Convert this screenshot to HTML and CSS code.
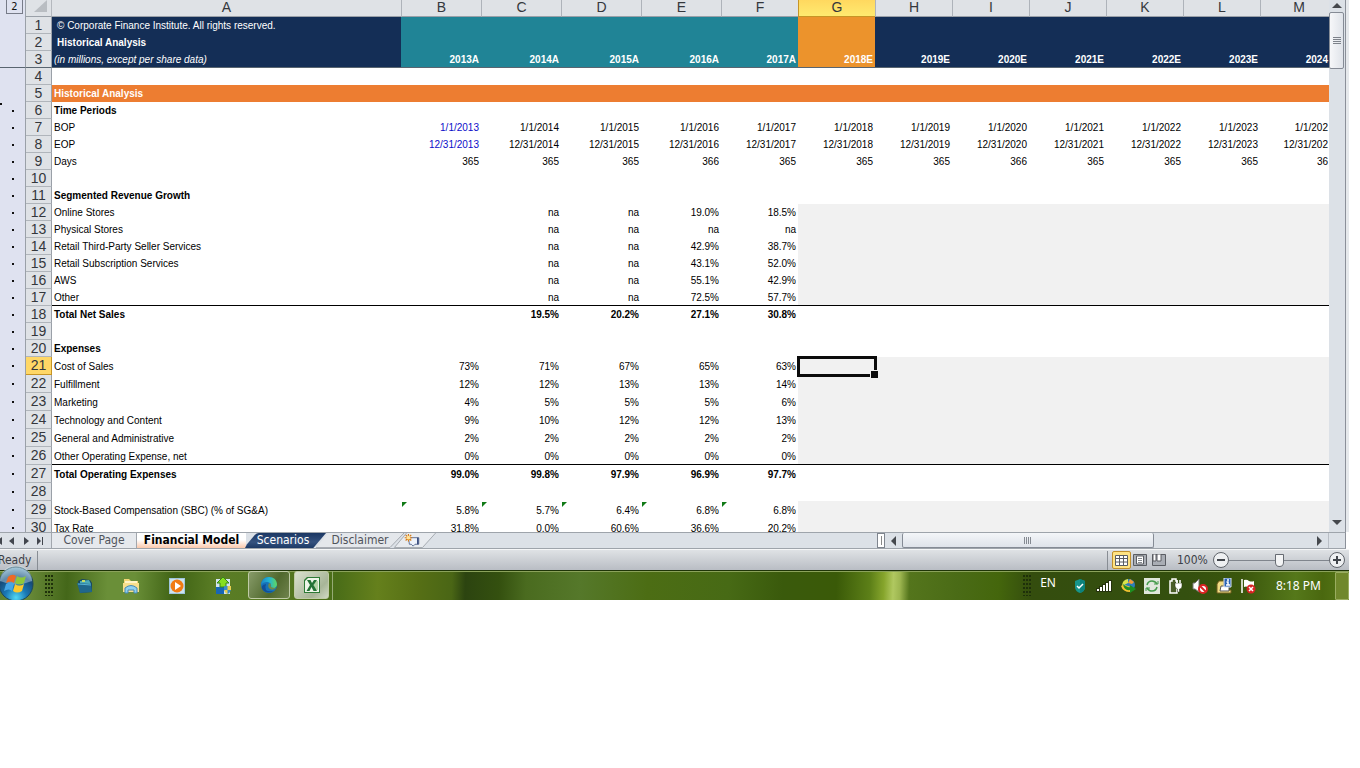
FILE: index.html
```html
<!DOCTYPE html>
<html lang="en">
<head>
<meta charset="utf-8">
<title>Financial Model</title>
<link rel="stylesheet" href="styles.css">
</head>
<body>
<div class="desktop">
<main class="workbook">
<div class="sheet">
<table class="grid">
<colgroup><col class="c-outline"><col class="c-num"><col class="c-label"><col class="c-wide"><col class="c-wide"><col class="c-wide"><col class="c-wide"><col class="c-year"><col class="c-year"><col class="c-year"><col class="c-year"><col class="c-year"><col class="c-year"><col class="c-year"><col class="c-year"></colgroup>
<thead>
<tr class="letters"><td class="outline"><button class="level">2</button></td><th class="corner"><svg width="14" height="13" viewBox="0 0 14 13"><path d="M13 0V12H0Z" fill="#b9bdc2"/></svg></th><th>A</th><th>B</th><th>C</th><th>D</th><th>E</th><th>F</th><th class="active">G</th><th>H</th><th>I</th><th>J</th><th>K</th><th>L</th><th>M</th></tr>
</thead>
<tbody>
<tr class="navy"><td class="outline"></td><th>1</th><td class="inset">© Corporate Finance Institute. All rights reserved.</td><td class="teal" colspan="5"></td><td class="amber"></td><td colspan="6"></td></tr>
<tr class="navy"><td class="outline"></td><th>2</th><td class="inset b">Historical Analysis</td><td class="teal" colspan="5"></td><td class="amber"></td><td colspan="6"></td></tr>
<tr class="navy frozen"><td class="outline"></td><th>3</th><td class="i">(in millions, except per share data)</td><td class="teal">2013A</td><td class="teal">2014A</td><td class="teal">2015A</td><td class="teal">2016A</td><td class="teal">2017A</td><td class="amber">2018E</td><td>2019E</td><td>2020E</td><td>2021E</td><td>2022E</td><td>2023E</td><td>2024</td></tr>
<tr><td class="outline"></td><th>4</th><td colspan="13"></td></tr>
<tr class="section"><td class="outline"></td><th>5</th><td colspan="13">Historical Analysis</td></tr>
<tr class="b"><td class="outline dot start"></td><th>6</th><td>Time Periods</td><td colspan="12"></td></tr>
<tr><td class="outline dot"></td><th>7</th><td>BOP</td><td class="blue">1/1/2013</td><td>1/1/2014</td><td>1/1/2015</td><td>1/1/2016</td><td>1/1/2017</td><td>1/1/2018</td><td>1/1/2019</td><td>1/1/2020</td><td>1/1/2021</td><td>1/1/2022</td><td>1/1/2023</td><td>1/1/202</td></tr>
<tr><td class="outline dot"></td><th>8</th><td>EOP</td><td class="blue">12/31/2013</td><td>12/31/2014</td><td>12/31/2015</td><td>12/31/2016</td><td>12/31/2017</td><td>12/31/2018</td><td>12/31/2019</td><td>12/31/2020</td><td>12/31/2021</td><td>12/31/2022</td><td>12/31/2023</td><td>12/31/202</td></tr>
<tr><td class="outline dot"></td><th>9</th><td>Days</td><td>365</td><td>365</td><td>365</td><td>366</td><td>365</td><td>365</td><td>365</td><td>366</td><td>365</td><td>365</td><td>365</td><td>36</td></tr>
<tr><td class="outline dot"></td><th>10</th><td colspan="13"></td></tr>
<tr class="b"><td class="outline dot"></td><th>11</th><td>Segmented Revenue Growth</td><td colspan="12"></td></tr>
<tr><td class="outline dot"></td><th>12</th><td>Online Stores</td><td></td><td>na</td><td>na</td><td>19.0%</td><td>18.5%</td><td class="gray" colspan="7"></td></tr>
<tr><td class="outline dot"></td><th>13</th><td>Physical Stores</td><td></td><td>na</td><td>na</td><td>na</td><td>na</td><td class="gray" colspan="7"></td></tr>
<tr><td class="outline dot"></td><th>14</th><td>Retail Third-Party Seller Services</td><td></td><td>na</td><td>na</td><td>42.9%</td><td>38.7%</td><td class="gray" colspan="7"></td></tr>
<tr><td class="outline dot"></td><th>15</th><td>Retail Subscription Services</td><td></td><td>na</td><td>na</td><td>43.1%</td><td>52.0%</td><td class="gray" colspan="7"></td></tr>
<tr><td class="outline dot"></td><th>16</th><td>AWS</td><td></td><td>na</td><td>na</td><td>55.1%</td><td>42.9%</td><td class="gray" colspan="7"></td></tr>
<tr class="ruled"><td class="outline dot"></td><th>17</th><td>Other</td><td></td><td>na</td><td>na</td><td>72.5%</td><td>57.7%</td><td class="gray" colspan="7"></td></tr>
<tr class="b"><td class="outline dot"></td><th>18</th><td>Total Net Sales</td><td></td><td>19.5%</td><td>20.2%</td><td>27.1%</td><td>30.8%</td><td colspan="7"></td></tr>
<tr><td class="outline dot"></td><th>19</th><td colspan="13"></td></tr>
<tr class="b"><td class="outline dot"></td><th>20</th><td>Expenses</td><td colspan="12"></td></tr>
</tbody>
<tbody class="tall">
<tr><td class="outline dot"></td><th class="active">21</th><td>Cost of Sales</td><td>73%</td><td>71%</td><td>67%</td><td>65%</td><td>63%</td><td class="gray selected"></td><td class="gray" colspan="6"></td></tr>
<tr><td class="outline dot"></td><th>22</th><td>Fulfillment</td><td>12%</td><td>12%</td><td>13%</td><td>13%</td><td>14%</td><td class="gray" colspan="7"></td></tr>
<tr><td class="outline dot"></td><th>23</th><td>Marketing</td><td>4%</td><td>5%</td><td>5%</td><td>5%</td><td>6%</td><td class="gray" colspan="7"></td></tr>
<tr><td class="outline dot"></td><th>24</th><td>Technology and Content</td><td>9%</td><td>10%</td><td>12%</td><td>12%</td><td>13%</td><td class="gray" colspan="7"></td></tr>
<tr><td class="outline dot"></td><th>25</th><td>General and Administrative</td><td>2%</td><td>2%</td><td>2%</td><td>2%</td><td>2%</td><td class="gray" colspan="7"></td></tr>
<tr class="ruled"><td class="outline dot"></td><th>26</th><td>Other Operating Expense, net</td><td>0%</td><td>0%</td><td>0%</td><td>0%</td><td>0%</td><td class="gray" colspan="7"></td></tr>
<tr class="b"><td class="outline dot"></td><th>27</th><td>Total Operating Expenses</td><td>99.0%</td><td>99.8%</td><td>97.9%</td><td>96.9%</td><td>97.7%</td><td colspan="7"></td></tr>
<tr><td class="outline dot"></td><th>28</th><td colspan="13"></td></tr>
<tr><td class="outline dot"></td><th>29</th><td>Stock-Based Compensation (SBC) (% of SG&amp;A)</td><td class="flag">5.8%</td><td class="flag">5.7%</td><td class="flag">6.4%</td><td class="flag">6.8%</td><td class="flag">6.8%</td><td class="gray" colspan="7"></td></tr>
<tr class="cut"><td class="outline dot"></td><th><div>30</div></th><td><div>Tax Rate</div></td><td><div>31.8%</div></td><td><div>0.0%</div></td><td><div>60.6%</div></td><td><div>36.6%</div></td><td><div>20.2%</div></td><td class="gray" colspan="7"></td></tr>
</tbody>
</table>
</div>
<div class="vscroll">
<button class="arrow" aria-label="Scroll up"><svg width="10" height="6"><path d="M0 5L5 0L10 5Z" fill="#45484d"/></svg></button>
<div class="vthumb"><svg width="8" height="8"><path d="M0 .5H8M0 2.500H8M0 4.500H8M0 6.500H8" stroke="#7d828a"/></svg></div>
<button class="arrow down" aria-label="Scroll down"><svg width="10" height="6"><path d="M0 0L5 5L10 0Z" fill="#45484d"/></svg></button>
</div>
</main>

<nav class="tabs">
<div class="tabnav">
<button aria-label="First sheet"><svg width="8" height="8"><path d="M0 0H2V8H0ZM8 0V8L3 4Z" fill="#42464e"/></svg></button>
<button aria-label="Previous sheet"><svg width="8" height="8"><path d="M6 0V8L1 4Z" fill="#42464e"/></svg></button>
<button aria-label="Next sheet"><svg width="8" height="8"><path d="M2 0V8L7 4Z" fill="#42464e"/></svg></button>
<button aria-label="Last sheet"><svg width="8" height="8"><path d="M1 0V8L5 4ZM6 0H7V8H6Z" fill="#42464e"/></svg></button>
</div>
<button class="tab cover">Cover Page</button>
<button class="tab current">Financial Model</button>
<button class="tab scen"><svg viewBox="0 0 84 16" preserveAspectRatio="none"><defs><linearGradient id="nv" x2="0" y2="1"><stop offset="0" stop-color="#1b3763"/><stop offset=".6" stop-color="#35527f"/><stop offset="1" stop-color="#1c3965"/></linearGradient></defs><path d="M0 16L2 12L10 2Q12 0 14 0H83L70 16Z" fill="url(#nv)"/></svg><span>Scenarios</span></button>
<button class="tab disc"><svg viewBox="0 0 88 16" preserveAspectRatio="none"><path d="M0 16L12 0H88L74 16Z" fill="#e4e7eb"/><path d="M0 15.500H74L88 0" fill="none" stroke="#a2a7ae"/></svg><span>Disclaimer</span></button>
<button class="tab new" aria-label="Insert worksheet"><svg viewBox="0 0 46 16"><path d="M1 15.500L14 0H45L31 15.500Z" fill="#e8ebef"/><path d="M1 15.500L14 0M45 0L31 15.500H1" fill="none" stroke="#a2a7ae"/><path d="M16 5H27V12H23L21 14L19 12H17Z" fill="#eef3fb" stroke="#5a6b91"/><path d="M26 5V12" stroke="#273d74" stroke-width="1.500"/><path d="M16 1V9M12 5H20M13 2L19 8M19 2L13 8" stroke="#d77910" stroke-width="1.200"/><circle cx="16" cy="5" r="2" fill="#ffe49a"/></svg></button>
<div class="hscroll">
<span class="splitter"></span>
<button class="arrow" aria-label="Scroll left"><svg width="6" height="10"><path d="M5 0V10L0 5Z" fill="#45484d"/></svg></button>
<div class="track"><div class="hthumb"><svg width="8" height="7"><path d="M.5 0V7M2.500 0V7M4.500 0V7M6.500 0V7" stroke="#858a92"/></svg></div></div>
<button class="arrow right" aria-label="Scroll right"><svg width="6" height="10"><path d="M0 0V10L5 5Z" fill="#45484d"/></svg></button>
</div>
</nav>

<footer class="status">
<span class="ready">Ready</span>
<div class="views">
<button class="view on" aria-label="Normal"><svg width="13" height="11"><path d="M.5 .5H12.500V10.500H.5ZM0 3.500H13M0 7H13M4.500 0V11M8.500 0V11" fill="#fff" stroke="#5a5d63"/></svg></button>
<button class="view" aria-label="Page layout"><svg width="14" height="12"><path d="M.5 .5H13.500V11.500H.5Z" fill="#a9adb4" stroke="#5a5d63"/><path d="M3.500 2H10.500V10H3.500Z" fill="#fff" stroke="#5a5d63"/><path d="M5 4.500H9M5 6.500H9M5 8.500H9" stroke="#85898f"/></svg></button>
<button class="view" aria-label="Page break preview"><svg width="14" height="12"><path d="M.5 .5H13.500V11.500H.5Z" fill="#a9adb4" stroke="#5a5d63"/><path d="M1 0H4V7H1ZM5 0H9V7H5Z" fill="#fff" stroke="#5a5d63"/></svg></button>
</div>
<label class="pct" for="zoom">100%</label>
<button class="round" aria-label="Zoom out"><svg width="16" height="16"><circle cx="8" cy="8" r="7.500" fill="#eef0f2" stroke="#5f646b"/><path d="M4 8H12" stroke="#42464c" stroke-width="2"/></svg></button>
<input id="zoom" class="zoom" type="range" min="0" max="100" value="50">
<button class="round" aria-label="Zoom in"><svg width="16" height="16"><circle cx="8" cy="8" r="7.500" fill="#eef0f2" stroke="#5f646b"/><path d="M4 8H12M8 4V12" stroke="#42464c" stroke-width="2"/></svg></button>
</footer>

<div class="taskbar">
<button class="orb" aria-label="Start"><svg width="36" height="34" viewBox="0 0 36 34"><defs><radialGradient id="ob" cx=".5" cy=".9" r=".9"><stop offset="0" stop-color="#53d8f5"/><stop offset=".35" stop-color="#1a79b5"/><stop offset=".7" stop-color="#164a78"/><stop offset="1" stop-color="#88b5cd"/></radialGradient></defs><circle cx="17" cy="18" r="17" fill="url(#ob)" stroke="#1d4559"/><path d="M1 15A16 16 0 0 1 33 15Q17 22 1 15Z" fill="#d9edf5" opacity=".4"/><path d="M9 11Q13 7 17 10L15 17Q12 14 7 17Z" fill="#ee6a24"/><path d="M18 10Q22 13 27 10L25 17Q21 20 16 17Z" fill="#8fc83a"/><path d="M7 18Q11 15 15 18L13 25Q10 22 5 25Z" fill="#45a6e6"/><path d="M16 18Q20 21 25 18L23 25Q18 28 14 25Z" fill="#fcc82c"/></svg></button>
<span class="grip"></span>
<div class="pins">
<button aria-label="Library"><svg width="18" height="18"><path d="M2 4L6 2L14 3L16 6V15L4 16Z" fill="#174762"/><path d="M4 4L13 3L15 7H4Z" fill="#4ba9b8"/><path d="M1 6L15 7L16 15L4 16Z" fill="#20678c"/><path d="M2 7L15 8" stroke="#58b3d2"/><path d="M6 4H9" stroke="#c7dc62" stroke-width="2"/></svg></button>
<button aria-label="File Explorer"><svg width="18" height="18"><path d="M2 2H7L9 4H16V15H2Z" fill="#f2d675"/><path d="M3 4H15V8H3Z" fill="#fff4c7"/><path d="M1 6H17V15H1Z" fill="#f8df8c"/><path d="M3 16V11Q9 6 15 11V16H12V13H6V16Z" fill="#8fd0f0" stroke="#4689b4"/></svg></button>
<button aria-label="Media Player"><svg width="18" height="18"><path d="M1 1H17V17H1Z" fill="#9fc6dd"/><path d="M2 2H16V16H2Z" fill="#cce4ef"/><circle cx="9" cy="9" r="6.500" fill="#f17b13"/><path d="M7 5V13L13 9Z" fill="#fff"/></svg></button>
<button aria-label="Updater"><svg width="18" height="18"><path d="M2 2H16V17H2Z" fill="#d3e4ef"/><path d="M2 10H10V17H2Z" fill="#1766b5"/><path d="M9 0L15 6H12V10H6V6H3Z" fill="#86df20" stroke="#35851a"/><path d="M10 9H17V13Q16 16 13.500 17Q11 15 10 13Z" fill="#3a8dc7"/><path d="M13.500 9H17V13H10Q11 16 13.500 17Z" fill="#e9cf50"/></svg></button>
</div>
<div class="apps">
<button class="app" aria-label="Edge"><svg width="18" height="18"><defs><linearGradient id="eg"><stop offset="0" stop-color="#1a83c9"/><stop offset=".5" stop-color="#22b5d3"/><stop offset="1" stop-color="#62d95b"/></linearGradient></defs><circle cx="9" cy="9" r="8" fill="#1672b8"/><path d="M1 9Q2 1 9 1Q16 1 17 8Q17 13 11 12Q12 6 7 6Q3 6 1 9Z" fill="url(#eg)"/><path d="M6 8Q3 17 14 15Q8 18 4 15Q0 12 3 9Z" fill="#114f99"/><path d="M11 8Q9 12 16 12Q13 15 10 13Q7 11 9 7Z" fill="#6f8b4d"/></svg></button>
<button class="app lit" aria-label="Excel"><svg width="18" height="18"><path d="M1 4L4 1H17V17H1Z" fill="#2d7a35"/><path d="M2 5L5 2H16V16H2Z" fill="#eef5e9"/><path d="M11 5H15V14H11Z" fill="#b4d5a7"/><path d="M4 4H7.500L9 7L11 4H14L10.500 9L14 15H10.500L8.500 11L6.500 15H3.500L7 9Z" fill="#247335"/></svg></button>
</div>
<div class="tray">
<span class="grip"></span>
<span class="lang">EN</span>
<div class="icons">
<svg width="16" height="16"><path d="M8 1L13 3V10Q12 14 8 15Q4 14 3 10V3Z" fill="#16958b"/><path d="M8 1L13 3V10Q12 14 8 15Z" fill="#0c827c"/><path d="M5 8L7 10L11 6" fill="none" stroke="#fff" stroke-width="1.500"/></svg>
<svg width="16" height="16"><path d="M0 10H3V14H0ZM3 8H6V14H3ZM6 6H9V14H6ZM9 4H12V14H9ZM12 2H16V14H12Z" fill="#25320d"/><path d="M1 11H3V13H1ZM4 9H6V13H4ZM7 7H9V13H7ZM10 5H12V13H10ZM13 3H15V13H13Z" fill="#fff"/></svg>
<svg width="16" height="16"><circle cx="9" cy="7" r="6" fill="#2d7dbb"/><path d="M8 1Q2 2 2 8L8 5Z" fill="#d8e34c"/><path d="M1 8Q3 6 8 8L13 10L10 14Q3 14 1 8Z" fill="#f4c332"/><path d="M3 6Q7 10 10 9V7L16 11L10 15V12Q4 13 3 6Z" fill="#1e8f22"/><path d="M10 1L14 4L12 6L8 5Z" fill="#f29a36"/></svg>
<svg width="16" height="16"><path d="M0 0H16V16H0Z" fill="#e0e7dc"/><path d="M3 7Q4 3 8 3Q11 3 13 6M13 9Q12 13 8 13Q5 13 3 10" fill="none" stroke="#459b4b" stroke-width="1.500"/><path d="M10 6H14V3M6 10H2V13" fill="none" stroke="#459b4b"/></svg>
<svg width="16" height="16"><path d="M2 3H4V1H8V3H9V15H2Z" fill="#4a5d28" stroke="#fff" stroke-width="1.500"/><path d="M7 5H14V8Q14 11 11.500 11V14H9.500V11Q7 10 7 8Z" fill="#fff" stroke="#25320d" stroke-width=".5"/><path d="M9 5V2M12 5V2" stroke="#fff" stroke-width="1.500"/></svg>
<svg width="16" height="16"><path d="M1 5H3L7 1V14L3 11H1Z" fill="#fff" stroke="#777"/><circle cx="11" cy="11" r="4" fill="#fff" stroke="#dc2323" stroke-width="2"/><path d="M8 8L14 14" stroke="#dc2323" stroke-width="2"/></svg>
<svg width="16" height="16"><path d="M1 6L3 3H8V12H15V15H1Z" fill="#f2dd83" stroke="#735f20"/><path d="M5 8H13V13H4Z" fill="#fff" stroke="#555"/><path d="M8 0H15V9H8Z" fill="#2861b2" stroke="#dfe9f8"/><path d="M11 2H13M10.500 4H12V7M10 7H14" stroke="#fff" stroke-width="1.500" fill="none"/></svg>
<svg width="16" height="16"><path d="M2 1V15" stroke="#fff" stroke-width="1.500"/><path d="M4 2Q7 1 9 3Q12 4 14 3V10Q10 11 8 9Q6 8 4 9Z" fill="#fff"/><circle cx="11" cy="11" r="4.500" fill="#d82424"/><path d="M9 9L13 13M13 9L9 13" stroke="#fff" stroke-width="1.500"/></svg>
</div>
<time class="clock">8:18 PM</time>
<button class="peek" aria-label="Show desktop"></button>
</div>
</div>
</div>
</body>
</html>
```
FILE: styles.css
```css
*{box-sizing:border-box}
body{margin:0;background:#fff}
button{margin:0;padding:0;border:0;background:none;font:inherit;color:inherit}
svg{display:block}
.desktop{margin-right:11px;overflow:hidden;font:12px "DejaVu Sans Condensed","DejaVu Sans",sans-serif;color:#3c4046}

/* worksheet */
.workbook{display:flex;border-right:3px solid #e6e9ec}
.sheet{flex:1;min-width:0;overflow:hidden}
.grid{table-layout:fixed;width:1337px;border-spacing:0;border-collapse:separate;font:10px/15px "Liberation Sans Narrow","Arial Narrow","Liberation Sans",sans-serif;color:#000}
.c-outline,.c-num{width:26px}
.c-label{width:349px}
.c-wide{width:80px}
.c-year{width:77px}
.grid td,.grid th{height:17px;padding:1px 2px 0 0;white-space:nowrap;text-align:right;vertical-align:top}
.grid td:nth-child(3){padding-left:2px;text-align:left}
.grid td:nth-child(15){padding-right:9px}
.grid th{padding:0;background:#dfe2e6;border-right:1px solid #9aa0a8;border-bottom:1px solid #b0b5bb;font-size:14px;line-height:16px;font-weight:400;text-align:center;color:#34373c}
.grid .letters th{border-right:0;border-left:1px solid #aeb3ba;border-bottom-color:#9aa0a8;line-height:14px}
.grid .letters th.corner,.grid .letters th.corner + th{border-left:0}
.grid .letters th.corner{border-right:1px solid #b4b8be}
.corner svg{margin:0 0 0 8px}
.grid th.active{background:#ffd766;border-color:#c79526}
.grid .letters th.active{background:linear-gradient(#ffd85f,#ffea70);border-color:#c79526}
.grid td.outline{position:relative;padding:0;background:#dfe2f0;border-right:1px solid #9aa0a8}
.level{display:block;margin-left:6px;width:17px;height:14px;border:1px solid #777b88;border-top:0;font:11px/13px "DejaVu Sans Condensed",sans-serif;text-align:center;color:#111}
.dot::after{content:"";position:absolute;left:12px;top:8px;width:2px;height:2px;background:#111}
.start::before{content:"";position:absolute;left:0;top:1px;width:2px;height:2px;background:#111}
.navy td{background:#142e56;color:#fff}
.navy td.teal{background:#208496}
.navy td.amber{background:#ec932c}
.grid .navy td.inset{padding-left:5px}
.grid .frozen td,.grid .frozen th{border-bottom:1px solid #596570;font-weight:700}
.grid .frozen th,.grid .frozen td.i{font-weight:400}
.i{font-style:italic}
.b td{font-weight:700}
.grid td.b{font-weight:700}
.section td:last-child{background:#ed7d31;color:#fff;font-weight:700}
.grid td.blue{color:#0d0dc9}
.grid td.gray{background:#f1f1f1}
.ruled td:not(.outline){border-bottom:1px solid #000}
.grid .tall td,.grid .tall th{height:18px}
.grid .tall td{padding-top:2px}
.grid .tall th{line-height:17px}
.selected{position:relative}
.selected::before{content:"";position:absolute;inset:-1px -2px -2px -1px;border:3px solid #0b0b0b}
.selected::after{content:"";position:absolute;right:-4px;bottom:-4px;width:7px;height:7px;background:#0b0b0b;border:1px solid #f1f1f1}
.flag{position:relative}
.flag::before{content:"";position:absolute;left:1px;top:1px;border-top:5px solid #117a17;border-right:5px solid transparent}
.grid .tall .cut td,.grid .tall .cut th{height:13px;border-bottom:0}
.cut td div{height:11px;overflow:hidden}
.cut th div{height:13px;overflow:hidden}

.vscroll{display:flex;flex-direction:column;width:17px;background:#dce1e7;border-right:1px solid #8b9099}
.arrow{display:flex;align-items:center;justify-content:center}
.vscroll .arrow{height:12px;width:15px}
.vthumb{display:flex;align-items:center;justify-content:center;width:15px;height:57px;border:1px solid #858b95;border-radius:2px;background:linear-gradient(90deg,#f6f7f9,#dfe3e9)}
.vscroll .down{margin-top:auto;height:18px}

/* sheet tabs and horizontal scroll */
.tabs{display:flex;height:17px;margin-right:3px;background:#dce1e7;border-top:1px solid #9ea4ab;border-bottom:1px solid #9ea4ab;border-right:1px solid #8b9099;font-size:12px;line-height:15px}
.tabnav{display:flex;align-items:center;gap:6px;width:52px;border-right:1px solid #a2a7ae}
.tabnav button:first-child{margin-left:-6px}
.tab{position:relative;height:15px;white-space:nowrap;color:#50545b}
.tab svg{position:absolute;left:0;top:0;width:100%;height:100%}
.tab span{position:relative}
.cover{width:85px;border-right:1px solid #a2a7ae;background:#e6e9ed}
.current{width:109px;font-weight:700;color:#000;background:linear-gradient(#fff 45%,#fbc9ac)}
.scen{width:82px;margin-left:-1px;padding-right:6px;color:#fff;z-index:1}
.disc{width:88px;margin-left:-11px}
.new{width:46px;margin-left:-12px}
.hscroll{display:flex;flex:0 0 468px;margin-left:auto}
.splitter{width:8px;border:1px solid #7f858e;background:linear-gradient(#888,#888) center/1px 9px no-repeat #fff}
.hscroll .arrow{width:17px}
.track{flex:1;display:flex}
.hthumb{display:flex;align-items:center;justify-content:center;width:252px;border:1px solid #858b95;border-top:0;border-radius:2px;background:linear-gradient(#f4f6f9,#dfe3ea)}
.hscroll .right{width:18px;margin-right:16px;border-right:1px solid #b9bec5}

.status{display:flex;align-items:center;height:21px;padding-right:4px;border-top:1px solid #f5f6f7;background:linear-gradient(#dfe2e5,#b9bdc4)}
.ready{margin-left:-2px;width:40px;border-right:1px solid #888d94;line-height:19px}
.views{display:flex;align-items:center;gap:5px;margin-left:auto;padding-left:4px;border-left:1px solid #888d94;height:19px}
.view{display:flex;align-items:center;justify-content:center;width:14px;height:18px}
.on{width:19px;border:1px solid #c1902c;border-radius:2px;background:#ffe383}
.on + .view{margin-left:-3px}
.pct{width:47px;padding-left:11px}
.zoom{-webkit-appearance:none;appearance:none;width:100px;height:16px;margin:0;background:linear-gradient(#80858d,#80858d) center/100% 1px no-repeat}
.zoom::-webkit-slider-thumb{-webkit-appearance:none;width:9px;height:13px;background:#f3f4f5;border:1px solid #666b72;border-radius:1px 1px 5px 5px}

/* taskbar */
.taskbar{display:flex;align-items:center;height:30px;border-top:1px solid #1f3507;color:#fff;box-shadow:inset 0 1px #8ba25b;background:
 linear-gradient(92deg,#5f832f 0,#6a8b3a 2%,#446719 5%,#6a8f38 8%,#6a8f38 10%,#3f6214 13%,#5a7d25 16%,#587a24 20%,#4a6d18 25%,#65801c 28%,#566f15 31%,#4a6615 33.500%,#2c4410 34.500%,#34500f 37%,#4a6b1f 39%,#55782a 43%,#4c6d14 48%,#476a15 54%,#3a5a0c 58%,#3a5a08 62%,#5d8018 64.500%,#86a52c 65.500%,#b0c860 66.200%,#9db650 66.700%,#54751c 67.400%,#4a6b16 71%,#44660c 74%,#344d0e 76.500%,#34500f 88%,#3a560c 92%,#55781a 96%,#4a680f 98%,#587a18)}
.orb{width:36px;height:34px;margin:-5px 10px 0 -1px;align-self:flex-start;position:relative}
.grip{width:9px;height:21px;background:radial-gradient(circle at 1px 1px,#1e300a 1px,transparent 1px) 0 0/3px 4px}
.pins{display:flex;gap:28px;margin-left:22px}
.apps{display:flex;gap:4px;margin-left:16px;align-self:stretch;padding-right:3px;border-right:1px solid #96aa75}
.app{display:flex;align-items:center;justify-content:center;width:42px;height:28px;border:1px solid #c0cba7;border-radius:3px;background:linear-gradient(120deg,#879b69,#50682d 60%,#70834d)}
.lit{width:35px;background:linear-gradient(135deg,#dae1cf,#a8b598 70%,#d0d8c3)}
.tray{display:flex;align-items:center;align-self:stretch;margin-left:auto;font:12px/16px "Noto Sans","Open Sans",sans-serif}
.lang{margin:0 16px 5px 8px}
.icons{display:flex;gap:8px}
.clock{margin-left:20px}
.peek{width:14px;height:28px;margin-left:14px;border:1px solid #9aad60;border-radius:1px;background:#70882c}
```
